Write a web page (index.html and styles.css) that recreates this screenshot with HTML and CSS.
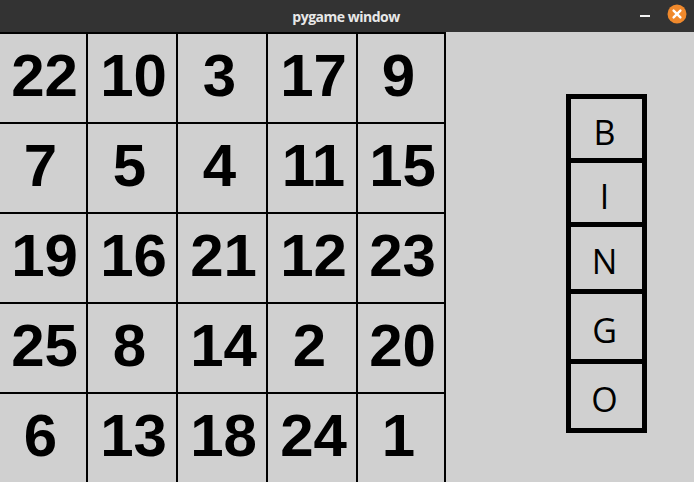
FILE: index.html
```html
<!DOCTYPE html>
<html>
<head>
<meta charset="utf-8">
<link rel="stylesheet" href="styles.css">
</head>
<body>
<div class="window">
  <div class="titlebar">
    <span class="title">pygame window</span>
    <div class="controls">
      <span class="minimize"></span>
      <svg class="close" width="20" height="20" viewBox="0 0 20 20">
        <circle cx="10" cy="10" r="9.5" fill="#f0892c"/>
        <path d="M6.6 6.6 L13.4 13.4 M13.4 6.6 L6.6 13.4" stroke="#fff" stroke-width="2.4" stroke-linecap="round"/>
      </svg>
    </div>
  </div>
  <div class="content">
    <div class="board">
      <div class="cell two">22</div><div class="cell two">10</div><div class="cell one">3</div><div class="cell two">17</div><div class="cell one">9</div>
      <div class="cell one">7</div><div class="cell one">5</div><div class="cell one">4</div><div class="cell two">11</div><div class="cell two">15</div>
      <div class="cell two">19</div><div class="cell two">16</div><div class="cell two">21</div><div class="cell two">12</div><div class="cell two">23</div>
      <div class="cell two">25</div><div class="cell one">8</div><div class="cell two">14</div><div class="cell one">2</div><div class="cell two">20</div>
      <div class="cell one">6</div><div class="cell two">13</div><div class="cell two">18</div><div class="cell two">24</div><div class="cell one">1</div>
    </div>
    <div class="bingo">
      <div class="letter l-b">B</div>
      <div class="letter l-i">I</div>
      <div class="letter l-n">N</div>
      <div class="letter l-g">G</div>
      <div class="letter l-o">O</div>
    </div>
  </div>
</div>
</body>
</html>
```
FILE: styles.css
```css
html, body {
  margin: 0;
  padding: 0;
  background: #d0d0d0;
}
.window {
  width: 694px;
  height: 482px;
  overflow: hidden;
  display: flex;
  flex-direction: column;
}
.titlebar {
  height: 32px;
  flex: none;
  background: #333333;
  display: flex;
  align-items: center;
  justify-content: center;
  position: relative;
}
.title {
  color: #e8e8e8;
  font-family: "Open Sans", sans-serif;
  font-weight: 700;
  font-size: 14px;
  letter-spacing: -0.5px;
  margin-left: -2px;
}
.controls {
  position: absolute;
  right: 7px;
  top: 4px;
  display: flex;
  align-items: center;
  gap: 17px;
}
.minimize {
  width: 10px;
  height: 2px;
  background: #f2f2f2;
  margin-top: 3px;
}
.close {
  display: block;
}
.content {
  flex: 1;
  display: flex;
  align-items: flex-start;
  background: #d0d0d0;
}
.board {
  display: grid;
  grid-template-columns: 86px 88px 88px 88px 86px;
  grid-auto-rows: 88px;
  gap: 2px;
  padding: 2px 2px 0 0;
  background: #000;
}
.cell {
  background: #d0d0d0;
  display: flex;
  align-items: center;
  justify-content: center;
  padding-bottom: 5px;
  box-sizing: border-box;
  font-family: "Liberation Sans", Arial, sans-serif;
  font-weight: bold;
  font-size: 60px;
  color: #000;
  line-height: 1;
}
.cell.one {
  padding-right: 5px;
}
.cell.two {
  padding-left: 3px;
}
.bingo {
  margin-left: 120px;
  margin-top: 62px;
  width: 71px;
  border: 5px solid #000;
  background: #000;
  display: flex;
  flex-direction: column;
  gap: 5px;
}
.letter {
  background: #d0d0d0;
  display: flex;
  align-items: center;
  justify-content: center;
  padding: 6px 4px 0 0;
  box-sizing: border-box;
  font-family: "Open Sans", sans-serif;
  font-size: 34px;
  line-height: 1;
  color: #000;
}
.l-b { height: 59px; }
.l-i { height: 59px; }
.l-n { height: 62px; }
.l-g { height: 65px; }
.l-o { height: 64px; }
```
